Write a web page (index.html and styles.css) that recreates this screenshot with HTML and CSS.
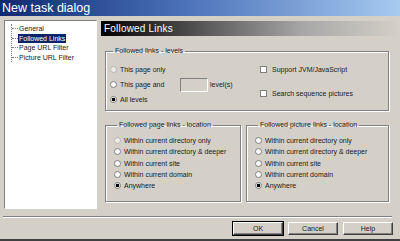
FILE: index.html
```html
<!DOCTYPE html>
<html lang="en">
<head>
  <meta charset="UTF-8" />
  <title>New task dialog</title>
  <link rel="stylesheet" href="styles.css">
</head>

<body>
  <div class="dialog">
    <div class="titlebar">New task dialog</div>

    <div class="main">
      <div class="tree">
        <ul>
          <li><span>General</span></li>
          <li><span class="selected">Followed Links</span></li>
          <li><span>Page URL Filter</span></li>
          <li><span>Picture URL Filter</span></li>
        </ul>
      </div>

      <div class="page">
        <div class="page-header">Followed Links</div>

        <fieldset class="group levels">
          <legend>Followed links - levels</legend>
          <div class="levels-body">
            <div class="col">
              <label class="row"><input type="radio" name="lvl" disabled> This page only</label>
              <label class="row">
                <input type="radio" name="lvl"> <span class="fixed">This page and</span>
                <input type="text" class="num" disabled><span class="after">level(s)</span>
              </label>
              <label class="row"><input type="radio" name="lvl" checked> All levels</label>
            </div>
            <div class="col checks">
              <label class="row"><input type="checkbox"> Support JVM/JavaScript</label>
              <label class="row"><input type="checkbox"> Search sequence pictures</label>
            </div>
          </div>
        </fieldset>

        <div class="pair">
          <fieldset class="group page-loc">
            <legend>Followed page links - location</legend>
            <label class="row small"><input type="radio" name="pl" disabled> Within current directory only</label>
            <label class="row small"><input type="radio" name="pl"> Within current directory &amp; deeper</label>
            <label class="row small"><input type="radio" name="pl"> Within current site</label>
            <label class="row small"><input type="radio" name="pl"> Within current domain</label>
            <label class="row small"><input type="radio" name="pl" checked> Anywhere</label>
          </fieldset>

          <fieldset class="group pic-loc">
            <legend>Followed picture links - location</legend>
            <label class="row small"><input type="radio" name="ql"> Within current directory only</label>
            <label class="row small"><input type="radio" name="ql"> Within current directory &amp; deeper</label>
            <label class="row small"><input type="radio" name="ql"> Within current site</label>
            <label class="row small"><input type="radio" name="ql"> Within current domain</label>
            <label class="row small"><input type="radio" name="ql" checked> Anywhere</label>
          </fieldset>
        </div>
      </div>
    </div>

    <div class="separator"></div>

    <div class="buttons">
      <button class="default">OK</button>
      <button>Cancel</button>
      <button>Help</button>
    </div>
  </div>
</body>
</html>
```

FILE: styles.css
```css
body {
  margin: 0;
  background: #d4d0c8;
  font-family: "Liberation Sans", Arial, sans-serif;
  font-size: 7px;
  color: #1a1a1a;
}

.dialog {
  width: 400px;
  height: 241px;
  box-sizing: border-box;
  background: #d4d0c8;
  border-bottom: 2px solid #404040;
  overflow: hidden;
}

.titlebar {
  height: 16px;
  line-height: 17px;
  padding-left: 2px;
  background: linear-gradient(to right, #0c2a72, #4a70b8 45%, #a6caf0);
  color: #fff;
  font-size: 12.5px;
}

.main {
  display: flex;
  gap: 4px;
  padding: 4px 0 0 4px;
}

/* left tree */
.tree {
  width: 93px;
  height: 189px;
  box-sizing: border-box;
  background: #fff;
  border: 1px solid;
  border-color: #808080 #fff #fff #808080;
  padding-top: 3px;
}

.tree ul {
  list-style: none;
  margin: 0 0 0 6px;
  padding: 0;
  border-left: 1px dotted #808080;
}

.tree li {
  display: flex;
  align-items: center;
  height: 9.5px;
}

.tree li::before {
  content: "";
  width: 6px;
  border-top: 1px dotted #808080;
}

.tree span {
  padding: 0 1px;
  line-height: 9px;
}

.tree .selected {
  background: #0a246a;
  color: #fff;
}

/* right page */
.page {
  flex: 1;
  margin-top: 1px;
}

.page-header {
  height: 15px;
  line-height: 15px;
  padding-left: 3px;
  background: linear-gradient(to right, #000, #5a5a5a 35%, #a8a8a8 68%, #d4d0c8);
  color: #fff;
  font-size: 10px;
  letter-spacing: 0.2px;
}

.group {
  margin: 0;
  padding: 0;
  min-inline-size: 0;
  border: 1px solid #808080;
  box-shadow: 1px 1px 0 #fff, inset 1px 1px 0 #fff;
}

.group legend {
  padding: 0 2px;
  margin-left: 3px;
  line-height: 8px;
}

.levels {
  margin: 11px 11px 0 4px;
  padding: 7px 0 3px 4px;
}

.levels-body {
  display: flex;
}

.levels .col {
  width: 150px;
}

.levels .checks {
  width: auto;
  display: flex;
  flex-direction: column;
  gap: 9px;
}

.row {
  display: flex;
  align-items: center;
  gap: 3px;
  height: 15px;
  white-space: nowrap;
}

.checks .row {
  gap: 5px;
}

.row.small {
  height: 11.25px;
}

.fixed {
  width: 57px;
}

.num {
  width: 28px;
  height: 14px;
  box-sizing: border-box;
  margin: 0;
  padding: 0;
  background: #d4d0c8;
  border: 1px solid;
  border-color: #808080 #fff #fff #808080;
}

.after {
  margin-left: -1px;
}

.pair {
  display: flex;
  gap: 5px;
  margin: 10px 11px 0 4px;
}

.page-loc,
.pic-loc {
  height: 81px;
  box-sizing: border-box;
  padding: 6px 0 0 8px;
}

.page-loc {
  width: 136px;
}

.pic-loc {
  flex: 1;
}

input[type="radio"],
input[type="checkbox"] {
  appearance: none;
  width: 7px;
  height: 7px;
  margin: 0;
  flex: none;
  box-sizing: border-box;
  background: #fff;
  border: 1px solid #808080;
}

input[type="radio"] {
  border-radius: 50%;
}

input[type="radio"]:disabled {
  background: #ecebe8;
  border-color: #b8b5ae;
}

input[type="radio"]:checked {
  background: radial-gradient(circle, #000 1.6px, #fff 2.1px);
}

.separator {
  margin: 7px 8px 0 3px;
  height: 1px;
  background: #808080;
  border-bottom: 1px solid #fff;
}

.buttons {
  display: flex;
  justify-content: flex-end;
  gap: 5px;
  margin-top: 4px;
  padding-right: 7px;
}

button {
  width: 50px;
  height: 13px;
  padding: 0;
  font-family: inherit;
  font-size: 7px;
  line-height: 11px;
  background: #d4d0c8;
  border: 1px solid;
  border-color: #fff #404040 #404040 #fff;
  box-shadow: inset -1px -1px 0 #808080;
  color: #1a1a1a;
}

button.default {
  outline: 1px solid #000;
  outline-offset: 0;
}
```
